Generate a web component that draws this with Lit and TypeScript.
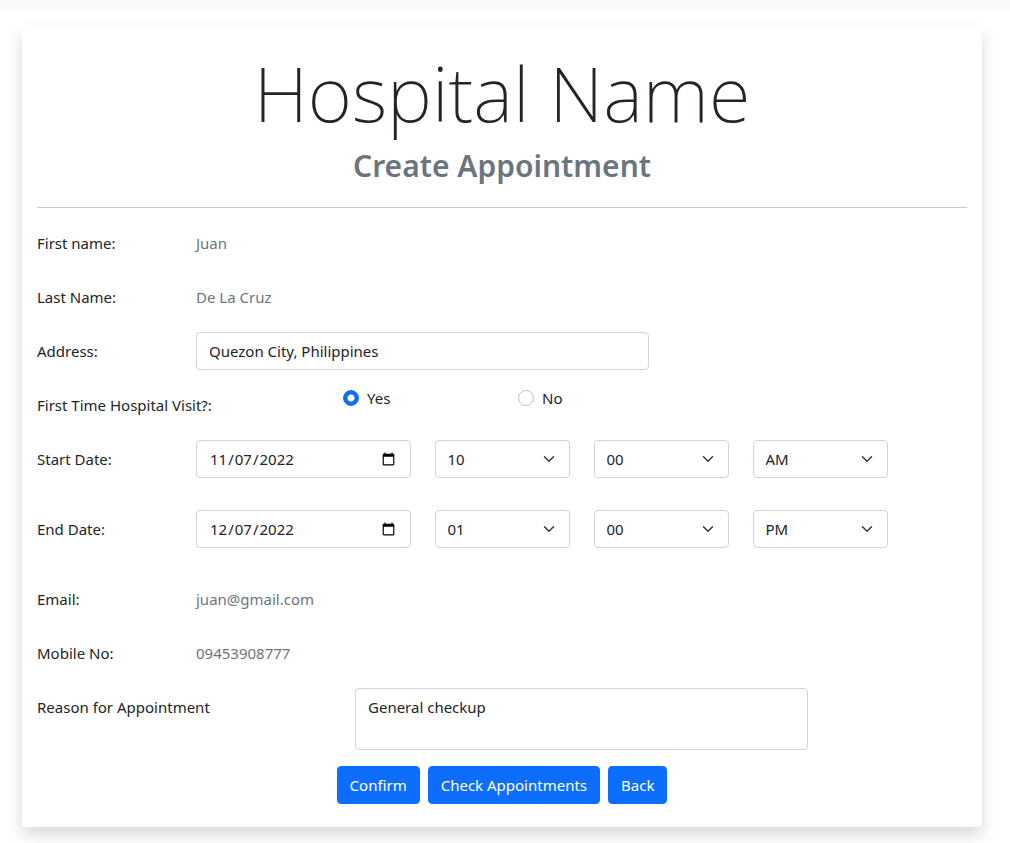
import { LitElement, html, css } from "lit";
import { customElement, property } from "lit/decorators.js";

@customElement("app-root")
export class AppRoot extends LitElement {
  @property({ type: String }) firstName = "Juan";
  @property({ type: String }) lastName = "De La Cruz";
  @property({ type: String }) email = "juan@gmail.com";
  @property({ type: String }) mobile = "09453908777";

  static styles = css`
    :host {
      display: block;
      background: #fff;
      color: #212529;
      font-family: "Segoe UI", "Noto Sans", "Open Sans", sans-serif;
      font-size: 15px;
      line-height: 24px;
    }
    * {
      box-sizing: border-box;
    }
    .topbar {
      height: 10px;
      background: #f8f9fa;
    }
    .page {
      padding: 16px 28px 16px 22px;
    }
    .card {
      max-width: 960px;
      margin: 0 auto;
      padding: 19px 15px 23px;
      background: #fff;
      border-radius: 4px;
      box-shadow: 0 8px 16px rgba(0, 0, 0, 0.15);
    }
    .title {
      margin: 0 0 6px;
      font-size: 76px;
      font-weight: 200;
      line-height: 96px;
      text-align: center;
    }
    .subtitle {
      margin: 0;
      color: #6c757d;
      font-size: 30px;
      font-weight: 600;
      line-height: 38px;
      text-align: center;
    }
    .rule {
      height: 1px;
      margin: 22px 0 16px;
      border: 0;
      background: #c8c9ca;
    }
    .form {
      display: flex;
      flex-direction: column;
      gap: 16px;
    }
    .row {
      display: grid;
      grid-template-columns: repeat(12, minmax(0, 1fr));
      column-gap: 24px;
      align-items: start;
    }
    .row.spaced {
      margin-bottom: 16px;
    }
    .label,
    .value {
      padding: 7px 0;
      white-space: nowrap;
    }
    .value {
      grid-column: span 6;
      color: #6c757d;
    }
    .two {
      grid-column: span 2;
    }
    .three {
      grid-column: span 3;
    }
    .four {
      grid-column: span 4;
    }
    .six {
      grid-column: span 6;
    }
    .control {
      display: block;
      width: 100%;
      height: 38px;
      margin: 0;
      padding: 6px 12px;
      border: 1px solid #ced4da;
      border-radius: 4px;
      background-color: #fff;
      color: #212529;
      font: inherit;
      appearance: none;
    }
    .select {
      background-image: url("data:image/svg+xml,%3csvg xmlns='http://www.w3.org/2000/svg' viewBox='0 0 16 16'%3e%3cpath fill='none' stroke='%23343a40' stroke-linecap='round' stroke-linejoin='round' stroke-width='2' d='M2 5l6 6 6-6'/%3e%3c/svg%3e");
      background-repeat: no-repeat;
      background-position: right 12px center;
      background-size: 16px 12px;
    }
    .area {
      height: 62px;
      resize: none;
    }
    .choices {
      grid-column: span 8;
      display: grid;
      grid-template-columns: repeat(2, 175px);
      margin-left: -12px;
    }
    .choice {
      display: flex;
      align-items: center;
      gap: 8px;
    }
    .radio {
      width: 16px;
      height: 16px;
      margin: 0;
      border: 1px solid #bfbfbf;
      border-radius: 50%;
      background: #fff;
      appearance: none;
    }
    .radio:checked {
      border-color: #0d6efd;
      background: radial-gradient(circle, #fff 3px, #0d6efd 4px);
    }
    .actions {
      display: flex;
      justify-content: center;
      gap: 8px;
    }
    .button {
      padding: 6px 12px;
      border: 1px solid #0d6efd;
      border-radius: 4px;
      background: #0d6efd;
      color: #fff;
      font: inherit;
      cursor: pointer;
    }
  `;

  private readonly hours = ["01", "02", "03", "04", "05", "06", "07", "08", "09", "10", "11", "12"];
  private readonly minutes = ["00", "15", "30", "45"];
  private readonly halves = ["AM", "PM"];

  private select(label: string, options: string[], chosen: string) {
    return html`<div class="two">
      <select class="control select" aria-label=${label}>
        ${options.map((o) => html`<option ?selected=${o === chosen}>${o}</option>`)}
      </select>
    </div>`;
  }

  private dateRow(id: string, label: string, date: string, hour: string, half: string) {
    return html`<div class="row spaced">
      <label class="label two" for=${id}>${label} Date:</label>
      <div class="three"><input class="control" type="date" id=${id} .value=${date} /></div>
      ${this.select(`${label} hour`, this.hours, hour)}
      ${this.select(`${label} minute`, this.minutes, "00")}
      ${this.select(`${label} AM or PM`, this.halves, half)}
    </div>`;
  }

  private textRow(label: string, value: string) {
    return html`<div class="row">
      <span class="label two">${label}</span>
      <span class="value">${value}</span>
    </div>`;
  }

  render() {
    return html`
      <div class="topbar"></div>
      <main class="page">
        <section class="card">
          <h1 class="title">Hospital Name</h1>
          <h2 class="subtitle">Create Appointment</h2>
          <hr class="rule" />
          <form class="form" @submit=${(e: Event) => e.preventDefault()}>
            ${this.textRow("First name:", this.firstName)}
            ${this.textRow("Last Name:", this.lastName)}
            <div class="row">
              <label class="label two" for="address">Address:</label>
              <div class="six">
                <input class="control" type="text" id="address" value="Quezon City, Philippines" />
              </div>
            </div>
            <div class="row" role="radiogroup" aria-labelledby="visit">
              <span class="label four" id="visit">First Time Hospital Visit?:</span>
              <div class="choices">
                <label class="choice"><input class="radio" type="radio" name="visit" value="yes" checked />Yes</label>
                <label class="choice"><input class="radio" type="radio" name="visit" value="no" />No</label>
              </div>
            </div>
            ${this.dateRow("start", "Start", "2022-11-07", "10", "AM")}
            ${this.dateRow("end", "End", "2022-12-07", "01", "PM")}
            ${this.textRow("Email:", this.email)}
            ${this.textRow("Mobile No:", this.mobile)}
            <div class="row">
              <label class="label four" for="reason">Reason for Appointment</label>
              <div class="six">
                <textarea class="control area" id="reason" .value=${"General checkup"}></textarea>
              </div>
            </div>
            <div class="actions">
              <button class="button" type="submit">Confirm</button>
              <button class="button" type="button">Check Appointments</button>
              <button class="button" type="button">Back</button>
            </div>
          </form>
        </section>
      </main>
    `;
  }
}
